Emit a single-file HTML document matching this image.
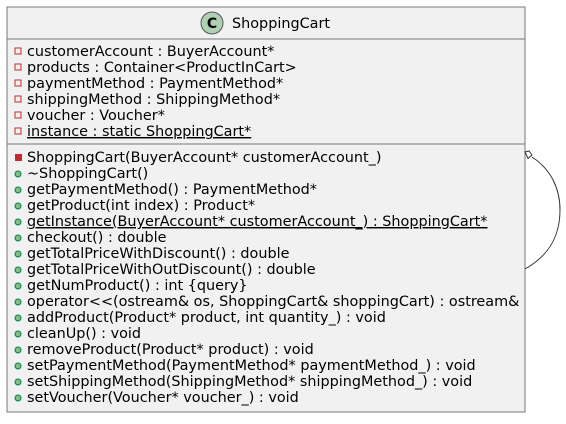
<!DOCTYPE html>
<html><head><style>body{margin:0;background:#fff}</style></head><body>
<svg width="566" height="419" xmlns="http://www.w3.org/2000/svg" font-family="DejaVu Sans, sans-serif" font-size="14.4">
<rect x="7" y="7" width="518" height="405" fill="#F1F1F1" stroke="#777" stroke-width="1"/>
<line x1="7" y1="39" x2="525" y2="39" stroke="#777"/>
<line x1="7" y1="144" x2="525" y2="144" stroke="#777"/>
<circle cx="212" cy="23" r="11" fill="#ADD1B2" stroke="#555"/>
<text x="212" y="28" text-anchor="middle" font-size="14" font-weight="bold" fill="#000">C</text>
<text x="232" y="28" fill="#000">ShoppingCart</text>
<g fill="none" stroke="#C82930">
<rect x="15" y="48" width="6" height="6"/><rect x="15" y="64" width="6" height="6"/><rect x="15" y="80" width="6" height="6"/><rect x="15" y="96" width="6" height="6"/><rect x="15" y="112" width="6" height="6"/><rect x="15" y="128" width="6" height="6"/>
</g>
<g fill="#000">
<text x="27" y="56">customerAccount : BuyerAccount*</text>
<text x="27" y="72">products : Container&lt;ProductInCart&gt;</text>
<text x="27" y="88">paymentMethod : PaymentMethod*</text>
<text x="27" y="104">shippingMethod : ShippingMethod*</text>
<text x="27" y="120">voucher : Voucher*</text>
<text x="27" y="136" text-decoration="underline">instance : static ShoppingCart*</text>
</g>
<rect x="15" y="154" width="7" height="7" fill="#C82930"/>
<g fill="#84BE84" stroke="#038048" stroke-width="1">
<circle cx="18" cy="174" r="3"/><circle cx="18" cy="190" r="3"/><circle cx="18" cy="206" r="3"/><circle cx="18" cy="222" r="3"/><circle cx="18" cy="238" r="3"/><circle cx="18" cy="254" r="3"/><circle cx="18" cy="270" r="3"/><circle cx="18" cy="286" r="3"/><circle cx="18" cy="302" r="3"/><circle cx="18" cy="318" r="3"/><circle cx="18" cy="334" r="3"/><circle cx="18" cy="350" r="3"/><circle cx="18" cy="366" r="3"/><circle cx="18" cy="382" r="3"/><circle cx="18" cy="398" r="3"/>
</g>
<g fill="#000">
<text x="27" y="162">ShoppingCart(BuyerAccount* customerAccount_)</text>
<text x="27" y="178">~ShoppingCart()</text>
<text x="27" y="194">getPaymentMethod() : PaymentMethod*</text>
<text x="27" y="210">getProduct(int index) : Product*</text>
<text x="27" y="226" text-decoration="underline">getInstance(BuyerAccount* customerAccount_) : ShoppingCart*</text>
<text x="27" y="242">checkout() : double</text>
<text x="27" y="258">getTotalPriceWithDiscount() : double</text>
<text x="27" y="274">getTotalPriceWithOutDiscount() : double</text>
<text x="27" y="290">getNumProduct() : int {query}</text>
<text x="27" y="306">operator&lt;&lt;(ostream&amp; os, ShoppingCart&amp; shoppingCart) : ostream&amp;</text>
<text x="27" y="322">addProduct(Product* product, int quantity_) : void</text>
<text x="27" y="338">cleanUp() : void</text>
<text x="27" y="354">removeProduct(Product* product) : void</text>
<text x="27" y="370">setPaymentMethod(PaymentMethod* paymentMethod_) : void</text>
<text x="27" y="386">setShippingMethod(ShippingMethod* shippingMethod_) : void</text>
<text x="27" y="402">setVoucher(Voucher* voucher_) : void</text>
</g>
<path d="M525,152 L529,151 L532,155 L528,158.5 Z" fill="#fff" stroke="#333"/>
<path d="M532,157 C552,170 560,190 560,210 C560,235 550,255 525,269" fill="none" stroke="#333"/>
</svg>
</body></html>
